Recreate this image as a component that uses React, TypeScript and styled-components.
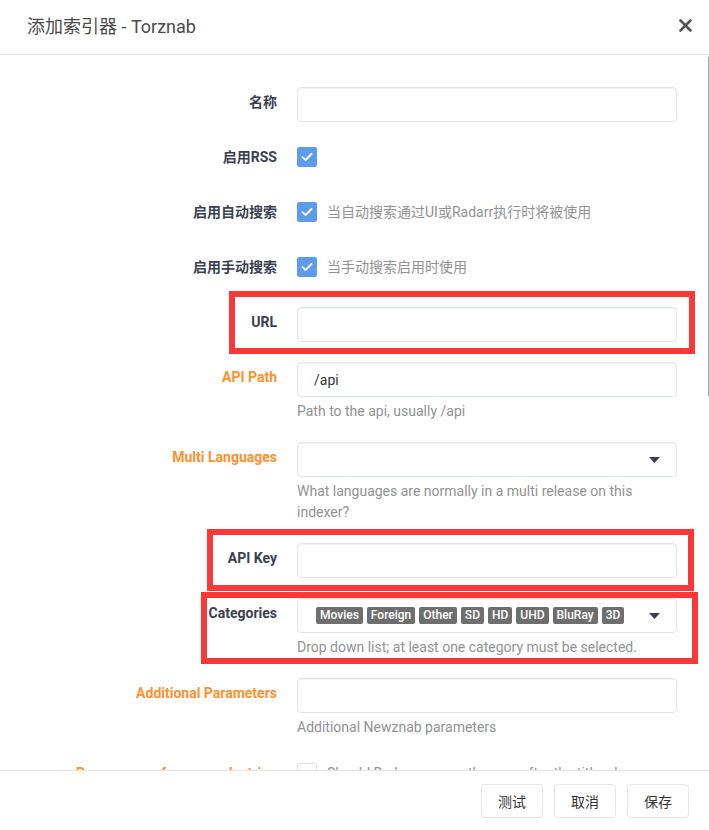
import React from 'react';
import styled, { createGlobalStyle } from 'styled-components';

const Global = createGlobalStyle`
  html, body { margin: 0; padding: 0; height: 100%; background: #fff; }
  body { font-family: Roboto, "Noto Sans CJK SC", sans-serif; }
  #root { height: 100%; }
  * { box-sizing: border-box; }
`;

const FONT = `Roboto, "Noto Sans CJK SC", sans-serif`;

const Modal = styled.div`
  position: relative;
  display: flex;
  flex-direction: column;
  height: 830px;
  background: #fff;
`;

const Header = styled.div`
  flex: 0 0 55px;
  height: 55px;
  border-bottom: 1px solid #e5e5e5;
  display: flex;
  align-items: center;
  justify-content: space-between;
  padding: 0 14px 4px 27px;
`;

const Title = styled.h4`
  margin: 0;
  font-family: ${FONT};
  font-size: 18px;
  font-weight: 400;
  color: #4a4a4a;
`;

const CloseButton = styled.button`
  width: 20px;
  height: 20px;
  padding: 0;
  border: 0;
  background: none;
  display: flex;
  align-items: center;
  justify-content: center;
  color: #555;
`;

const Body = styled.div`
  flex: 1 1 auto;
  overflow-y: auto;
  padding: 32px 32px 30px 27px;
  scrollbar-width: none;
  &::-webkit-scrollbar { display: none; }
`;

const ScrollThumb = styled.div`
  position: absolute;
  top: 57px;
  right: 0;
  width: 1px;
  height: 339px;
  background: #9ea3b8;
  pointer-events: none;
`;

const Group = styled.div`
  position: relative;
  display: flex;
  align-items: flex-start;
  min-height: 35px;
  margin-bottom: 20px;
`;

const Label = styled.label<{ $advanced?: boolean }>`
  flex: 0 0 250px;
  margin-right: 20px;
  padding-top: 5px;
  text-align: right;
  font-family: ${FONT};
  font-size: 14px;
  font-weight: 700;
  line-height: 21px;
  color: ${(p) => (p.$advanced ? '#ff902b' : '#3a3f51')};
`;

const Field = styled.div`
  flex: 1 1 auto;
  min-width: 0;
`;

const Input = styled.input`
  display: block;
  width: 100%;
  height: 35px;
  padding: 6px 16px;
  border: 1px solid #dde6e9;
  border-radius: 4px;
  box-shadow: inset 0 1px 1px rgba(0, 0, 0, 0.05);
  font-family: ${FONT};
  font-size: 14px;
  color: #333;
  background: #fff;
  outline: none;
`;

const Select = styled.div`
  display: flex;
  align-items: center;
  height: 35px;
  padding: 0 16px 0 18px;
  border: 1px solid #dde6e9;
  border-radius: 4px;
  box-shadow: inset 0 1px 1px rgba(0, 0, 0, 0.05);
  background: #fff;
`;

const Tags = styled.div`
  flex: 1 1 auto;
  display: flex;
  gap: 4px;
`;

const Tag = styled.span`
  display: inline-block;
  padding: 0 4px;
  height: 17px;
  line-height: 17px;
  border-radius: 2px;
  background: #6e6e6e;
  color: #fff;
  font-family: ${FONT};
  font-size: 12px;
  font-weight: 500;
`;

const Caret = styled.svg`
  flex: 0 0 auto;
  margin-left: auto;
  color: #3a3f51;
`;

const Help = styled.div`
  margin-top: 4px;
  font-family: ${FONT};
  font-size: 14px;
  line-height: 21px;
  color: #909293;
`;

const CheckRow = styled.div`
  display: flex;
  align-items: flex-start;
  gap: 10px;
`;

const Check = styled.span<{ $checked?: boolean }>`
  flex: 0 0 20px;
  width: 20px;
  height: 20px;
  margin-top: 5px;
  border-radius: 2px;
  border: 1px solid ${(p) => (p.$checked ? '#5d9cec' : '#dde6e9')};
  background: ${(p) => (p.$checked ? '#5d9cec' : '#fff')};
  display: flex;
  align-items: center;
  justify-content: center;
`;

const CheckText = styled.span`
  padding-top: 5px;
  font-family: ${FONT};
  font-size: 14px;
  line-height: 20px;
  color: #909293;
`;

const Highlight = styled.div<{ $t: number; $l: number; $r: number; $b: number }>`
  position: absolute;
  top: ${(p) => p.$t}px;
  left: ${(p) => p.$l}px;
  right: ${(p) => p.$r}px;
  bottom: ${(p) => p.$b}px;
  border: 6px solid #fb3838;
  pointer-events: none;
`;

const Footer = styled.div`
  flex: 0 0 60px;
  height: 60px;
  border-top: 1px solid #e5e5e5;
  display: flex;
  align-items: center;
  justify-content: flex-end;
  gap: 11px;
  padding: 0 20px 0 0;
`;

const Button = styled.button`
  height: 34px;
  padding: 0 16px;
  border: 1px solid #e6e6e6;
  border-radius: 4px;
  background: #fff;
  font-family: ${FONT};
  font-size: 14px;
  color: #333;
`;

const CheckMark = () => (
  <svg width="12" height="10" viewBox="0 0 12 10" fill="none">
    <path d="M1.5 5.2 L4.6 8 L10.5 2" stroke="#fff" strokeWidth="1.8" strokeLinecap="round" strokeLinejoin="round" />
  </svg>
);

const CaretDown = () => (
  <Caret width="11" height="6" viewBox="0 0 11 6">
    <path d="M0 0 H11 L5.5 6 Z" fill="currentColor" />
  </Caret>
);

const CheckField = ({ checked, text }: { checked?: boolean; text?: string }) => (
  <CheckRow>
    <Check $checked={checked}>{checked && <CheckMark />}</Check>
    {text && <CheckText>{text}</CheckText>}
  </CheckRow>
);

const categories = ['Movies', 'Foreign', 'Other', 'SD', 'HD', 'UHD', 'BluRay', '3D'];

export default function App() {
  return (
    <>
      <Global />
      <Modal>
        <Header>
          <Title>添加索引器 - Torznab</Title>
          <CloseButton aria-label="close">
            <svg width="13" height="13" viewBox="0 0 13 13">
              <path d="M1.5 1.5 L11.5 11.5 M11.5 1.5 L1.5 11.5" stroke="#555" strokeWidth="2.6" strokeLinecap="round" />
            </svg>
          </CloseButton>
        </Header>
        <Body>
          <Group>
            <Label>名称</Label>
            <Field><Input /></Field>
          </Group>
          <Group>
            <Label>启用RSS</Label>
            <Field><CheckField checked /></Field>
          </Group>
          <Group>
            <Label>启用自动搜索</Label>
            <Field><CheckField checked text="当自动搜索通过UI或Radarr执行时将被使用" /></Field>
          </Group>
          <Group>
            <Label>启用手动搜索</Label>
            <Field><CheckField checked text="当手动搜索启用时使用" /></Field>
          </Group>
          <Group>
            <Label>URL</Label>
            <Field><Input /></Field>
            <Highlight $t={-16} $l={202} $r={-18} $b={-12} />
          </Group>
          <Group>
            <Label $advanced>API Path</Label>
            <Field>
              <Input defaultValue="/api" />
              <Help>Path to the api, usually /api</Help>
            </Field>
          </Group>
          <Group>
            <Label $advanced>Multi Languages</Label>
            <Field>
              <Select><CaretDown /></Select>
              <Help>What languages are normally in a multi release on this indexer?</Help>
            </Field>
          </Group>
          <Group>
            <Label>API Key</Label>
            <Field><Input /></Field>
            <Highlight $t={-14} $l={180} $r={-17} $b={-13} />
          </Group>
          <Group>
            <Label>Categories</Label>
            <Field>
              <Select>
                <Tags>
                  {categories.map((c) => (
                    <Tag key={c}>{c}</Tag>
                  ))}
                </Tags>
                <CaretDown />
              </Select>
              <Help>Drop down list; at least one category must be selected.</Help>
            </Field>
            <Highlight $t={-6} $l={174} $r={-21} $b={-6} />
          </Group>
          <Group>
            <Label $advanced>Additional Parameters</Label>
            <Field>
              <Input />
              <Help>Additional Newznab parameters</Help>
            </Field>
          </Group>
          <Group>
            <Label $advanced>Remove year from search string</Label>
            <Field><CheckField text="Should Radarr remove the year after the title when searching this indexer?" /></Field>
          </Group>
          <Group>
            <Label>Minimum Seeders</Label>
            <Field>
              <Input defaultValue="1" />
              <Help>Minimum number of seeders required.</Help>
            </Field>
          </Group>
          <Group>
            <Label $advanced>Required Flags</Label>
            <Field>
              <Select><CaretDown /></Select>
              <Help>What indexer flags are required?</Help>
            </Field>
          </Group>
          <Group>
            <Label>Seed Ratio</Label>
            <Field>
              <Input />
              <Help>The ratio a torrent should reach before stopping, empty is download client's default. Ratio should be at least 1.0 and follow the indexers rules</Help>
            </Field>
          </Group>
          <Group>
            <Label>Seed Time</Label>
            <Field>
              <Input />
              <Help>The time a torrent should be seeded before stopping, empty is download client's default</Help>
            </Field>
          </Group>
          <Group>
            <Label $advanced>Indexer Priority</Label>
            <Field>
              <Input defaultValue="25" />
              <Help>Indexer Priority from 1 (Highest) to 50 (Lowest). Default: 25.</Help>
            </Field>
          </Group>
          <Group>
            <Label>标签</Label>
            <Field><Input /></Field>
          </Group>
        </Body>
        <ScrollThumb />
        <Footer>
          <Button>测试</Button>
          <Button>取消</Button>
          <Button>保存</Button>
        </Footer>
      </Modal>
    </>
  );
}
